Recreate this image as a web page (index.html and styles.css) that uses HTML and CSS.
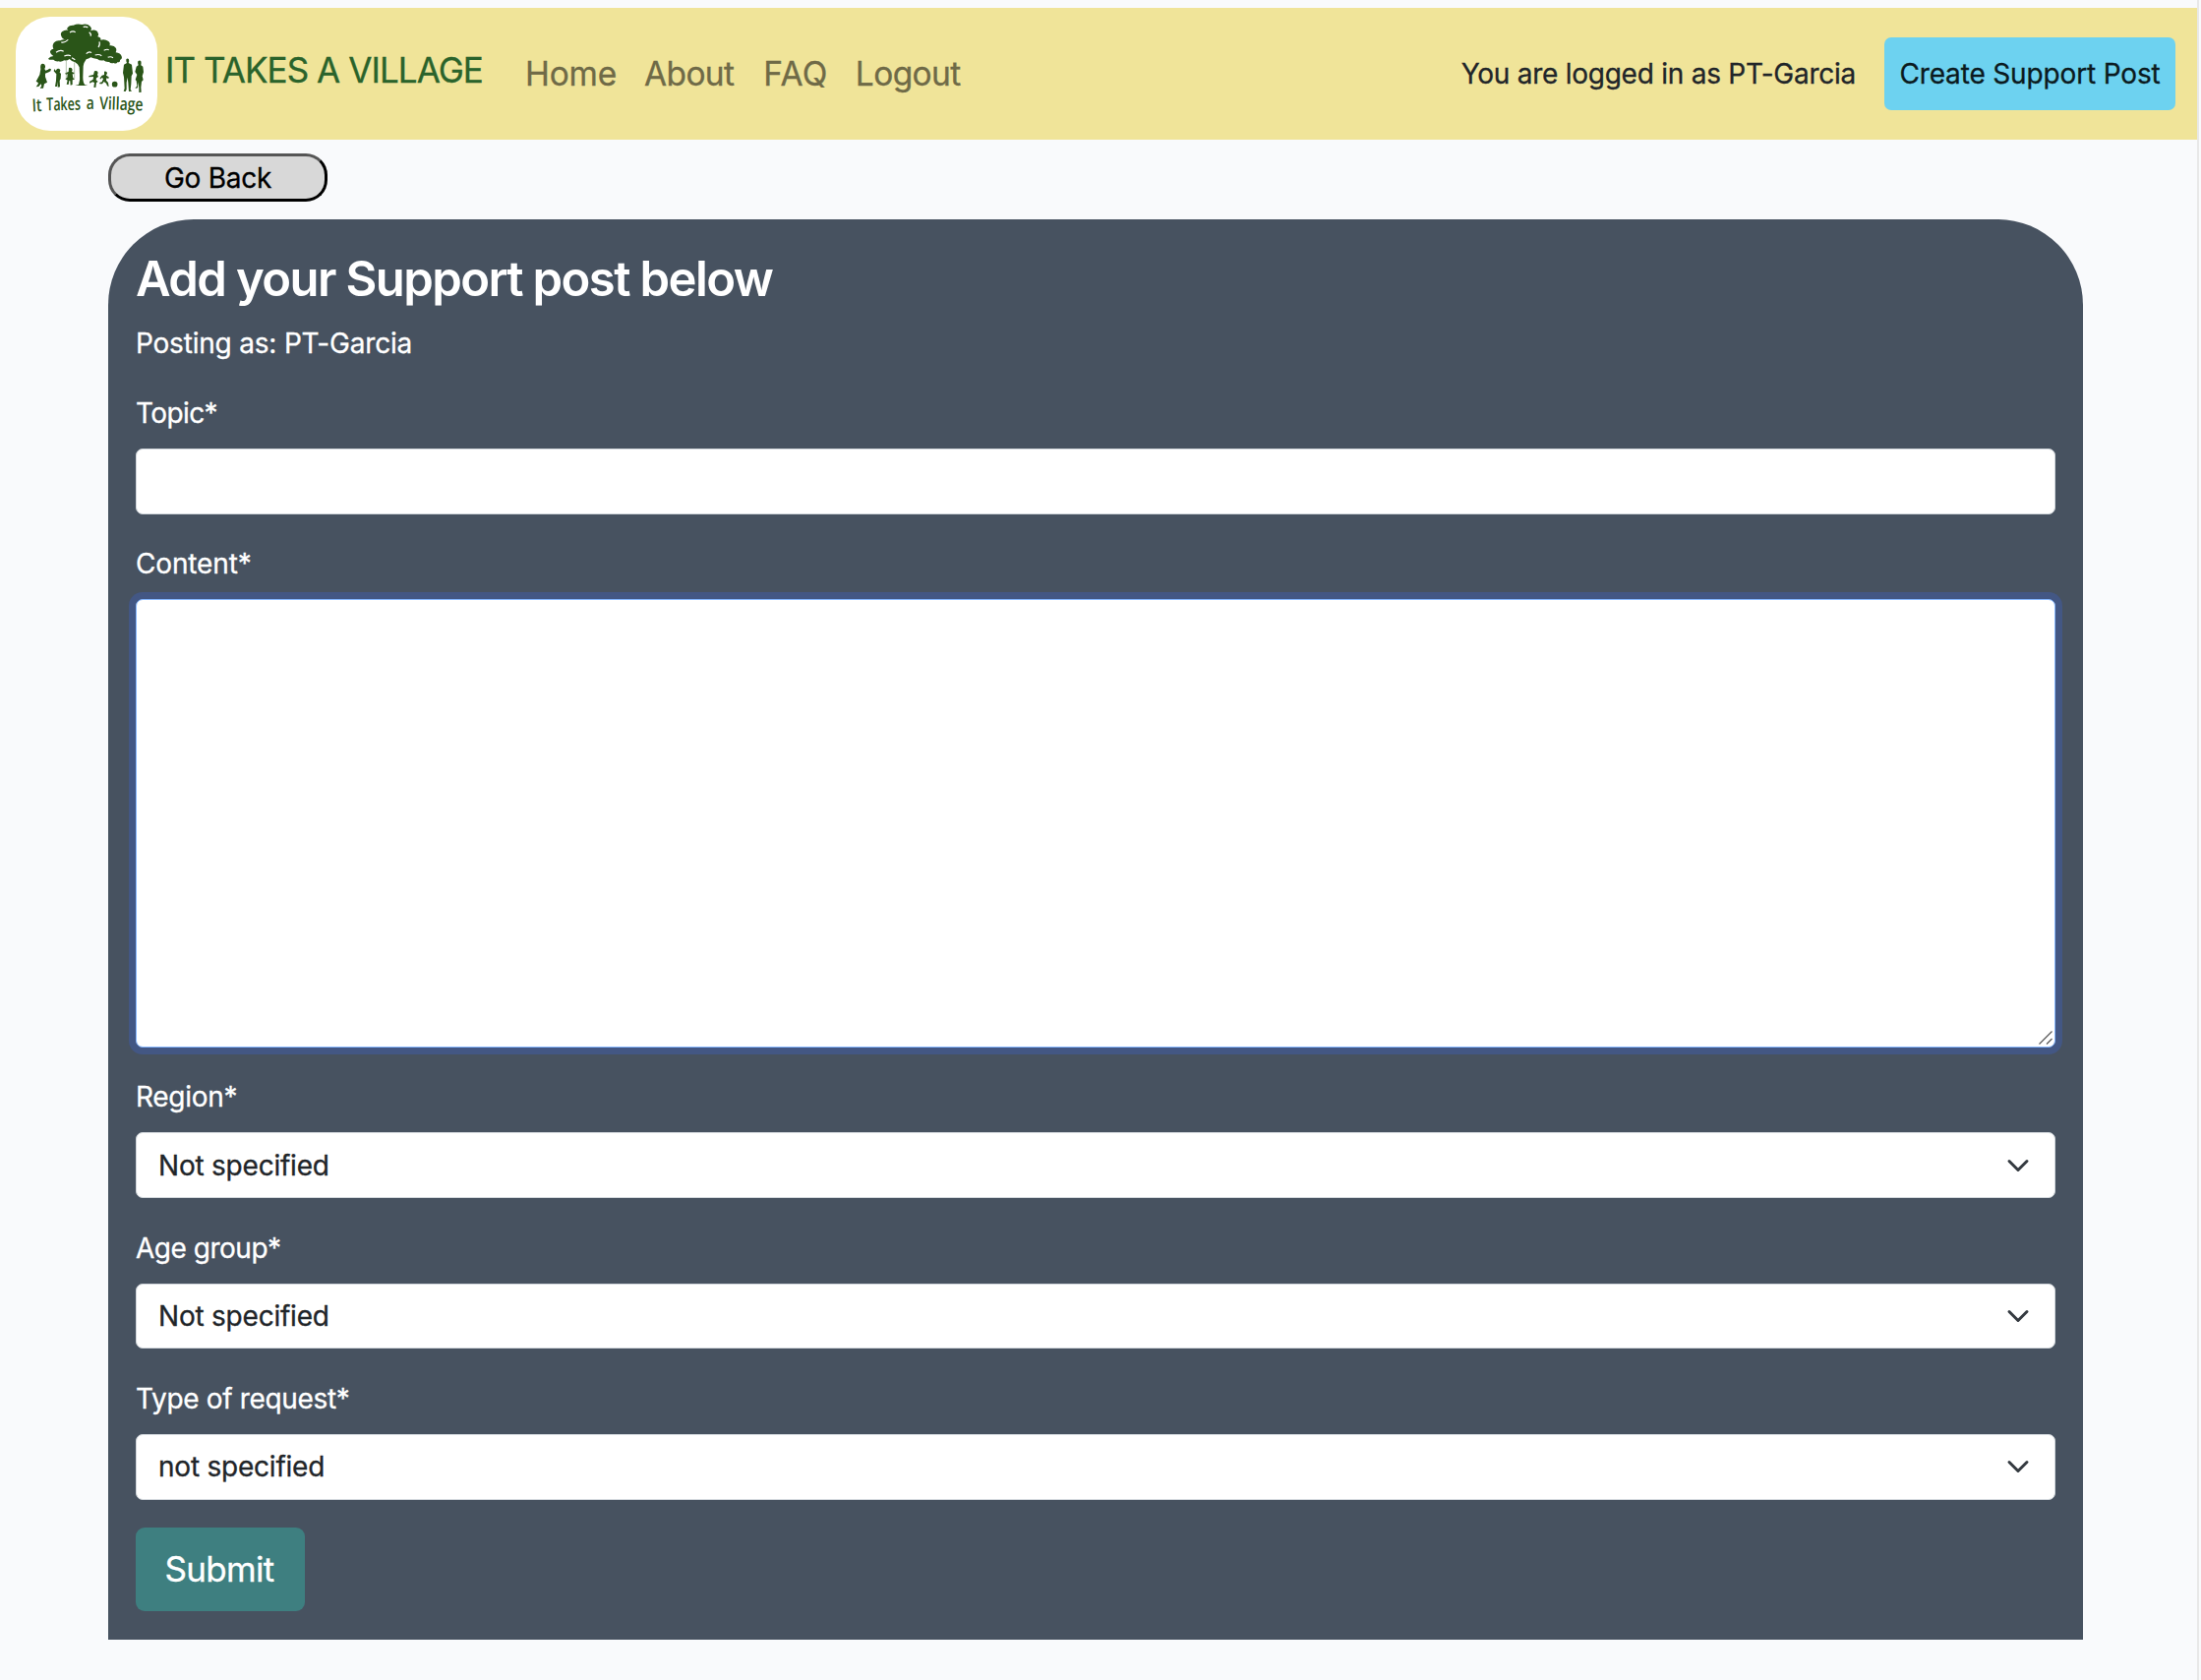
FILE: index.html
```html
<!DOCTYPE html>
<html lang="en">
<head>
<meta charset="utf-8">
<title>It Takes a Village - Add Support Post</title>
<link rel="stylesheet" href="styles.css">
</head>
<body>
<div class="page">
  <header class="navbar">
    <a class="brand">
      <svg class="logo" viewBox="48 51 432 348" role="img" aria-label="It Takes a Village logo">
        <g class="logo-ink">
          <!-- tree crown -->
          <path d="M206 84 Q212 76 224 77 Q236 71 250 75 Q266 71 275 80 Q282 87 276 94 Q290 88 297 96 Q303 104 298 112 Q309 114 307 122 Q320 118 331 126 Q338 132 334 139 Q348 137 354 147 Q357 154 353 160 Q368 162 371 172 Q374 180 366 183 Q368 190 358 190 Q355 196 347 192 Q338 195 333 189 Q322 190 316 184 Q304 186 297 180 Q284 179 277 175 Q270 179 263 181 Q256 190 254 202 L253 236 Q253 252 259 259 L268 261 L229 261 L240 258 Q245 244 243 228 L242 205 Q238 194 229 190 Q218 187 212 180 Q204 186 196 184 Q186 191 178 187 Q168 188 163 182 Q150 184 147 179 Q153 171 163 171 Q152 164 153 156 Q158 149 163 149 Q158 138 165 130 Q172 122 184 124 Q192 118 202 122 Q190 119 187 110 Q183 101 190 96 Q198 90 208 92 Q202 89 206 84Z"/>
          <!-- woman reaching out, child, child on the swing -->
          <path d="M127 195 Q136 193 138 201 Q139 206 136 210 L139 215 L147 212 Q151 207 156 211 Q156 218 149 220 L138 224 L138 234 L144 251 L135 256 L132 269 L122 269 L127 262 L125 256 L118 264 L110 265 L115 258 L117 253 L110 248 L121 228 L124 211 Q122 199 127 195Z"/>
          <path d="M174 210 Q182 207 184 214 L182 222 L186 224 L185 240 L182 246 L183 265 L176 266 L177 249 L174 264 L168 264 L171 246 L172 226 L164 217 L166 210 L170 216Z"/>
          <path d="M210 207 Q220 205 221 213 L219 219 L227 222 L225 226 L221 226 L223 238 L228 242 L221 244 L221 258 L215 260 L214 247 L211 246 L209 258 L203 257 L206 245 L199 241 L205 236 L206 225 L201 228 L199 223 L209 219Z"/>
          <!-- running children and ball -->
          <path d="M288 217 Q298 214 299 222 L297 228 L300 234 L294 238 L293 244 L299 249 L294 252 L292 267 L286 266 L288 252 L282 250 L274 254 L273 249 L284 242 L285 234 L270 235 L272 231 L285 228Z"/>
          <path d="M318 218 Q326 216 327 223 L324 230 L332 235 L331 240 L325 238 L324 245 L330 252 L332 264 L327 262 L324 254 L317 249 L312 256 L304 256 L304 252 L311 250 L315 240 L311 237 L306 242 L305 238 L311 230 L318 228Z"/>
          <circle cx="350" cy="257" r="8.5"/>
          <!-- standing couple -->
          <path d="M385 181 Q389 176 393 181 Q395 187 392 192 L402 197 L405 224 L401 232 L400 256 L398 273 L402 278 L393 279 L391 252 L389 236 L386 252 L386 273 L383 279 L377 278 L380 270 L378 235 L375 222 L378 197 L387 192 Q384 187 385 181Z"/>
          <path d="M421 187 Q426 182 430 187 Q432 194 430 199 L436 203 L438 220 L434 232 L437 244 L432 249 L430 266 L431 281 L424 282 L424 268 L422 250 L420 268 L412 270 L418 262 L416 247 L413 243 L418 228 L412 219 L416 203 L422 199 Q419 193 421 187Z"/>
        </g>
        <!-- gaps between the leaves -->
        <g class="logo-gaps">
          <path d="M213 99 Q222 93 230 98M187 128 Q194 133 208 121M171 160 Q184 150 194 157M196 171 Q207 166 216 170M219 176 L229 182M263 164 Q272 155 279 161M290 168 Q302 164 310 170M303 127 Q306 137 300 144M317 154 Q328 148 332 153M329 175 Q337 171 345 176M254 82 Q264 80 268 84M272 98 Q280 104 276 110"/>
        </g>
        <path class="logo-ropes" d="M202 184V240M227 190V240"/>
        <g class="logo-text">
          <text x="99" y="340" textLength="29" lengthAdjust="spacingAndGlyphs" transform="rotate(-3 114 338)">It</text>
          <text x="142" y="336" textLength="104" lengthAdjust="spacingAndGlyphs" transform="rotate(-1 190 335)">Takes</text>
          <text x="263" y="332" textLength="24" lengthAdjust="spacingAndGlyphs">a</text>
          <text x="303" y="333" textLength="133" lengthAdjust="spacingAndGlyphs" transform="rotate(2 303 332)">Village</text>
        </g>
      </svg>
      <span class="brand-name">IT TAKES A VILLAGE</span>
    </a>
    <nav class="links">
      <a class="link link-home">Home</a>
      <a class="link link-about">About</a>
      <a class="link link-faq">FAQ</a>
      <a class="link link-logout">Logout</a>
    </nav>
    <span class="login-state">You are logged in as PT-Garcia</span>
    <a class="create-btn">Create Support Post</a>
  </header>
  <main class="content">
    <button class="back-btn" type="button">Go Back</button>
    <section class="panel">
      <h2 class="panel-title">Add your Support post below</h2>
      <p class="author">Posting as: PT-Garcia</p>
      <form>
        <div class="field">
          <label class="label label-topic">Topic*</label>
          <div class="control"></div>
        </div>
        <div class="field">
          <label class="label label-content">Content*</label>
          <div class="control textarea">
            <svg class="grip" viewBox="0 0 14 14"><path d="M.5 13.5 13.5 .5M8 13.5 13.5 8"/></svg>
          </div>
        </div>
        <div class="field">
          <label class="label label-region">Region*</label>
          <div class="control select">Not specified<svg class="chevron" viewBox="0 0 16 16"><path d="m2 5 6 6 6-6"/></svg></div>
        </div>
        <div class="field">
          <label class="label label-age">Age group*</label>
          <div class="control select">Not specified<svg class="chevron" viewBox="0 0 16 16"><path d="m2 5 6 6 6-6"/></svg></div>
        </div>
        <div class="field">
          <label class="label label-type">Type of request*</label>
          <div class="control select">not specified<svg class="chevron" viewBox="0 0 16 16"><path d="m2 5 6 6 6-6"/></svg></div>
        </div>
        <button class="submit-btn" type="button">Submit</button>
      </form>
    </section>
  </main>
</div>
</body>
</html>
```
FILE: styles.css
```css
* { box-sizing: border-box; }

body {
  margin: 0;
  background: #f9fafc;
  color: #212529;
  font: 28px/42px Inter, "Liberation Sans", sans-serif;
  -webkit-text-stroke: 0.3px;
}

.page {
  width: 2236px;
  height: 1708px;
  padding-top: 8px;
  border-right: 2px solid #e8e8e8;
  overflow: hidden;
}

.navbar {
  display: flex;
  align-items: center;
  height: 134px;
  padding: 0 22px 0 16px;
  background: #f0e499;
}

.brand {
  display: flex;
  align-items: center;
  gap: 8px;
  width: 518px;
}

.logo {
  flex: none;
  width: 144px;
  height: 116px;
  border-radius: 35px;
  background: #fff;
}

.logo-ink { fill: #2a5518; }
.logo-gaps { fill: none; stroke: #fff; stroke-width: 3.5; }
.logo-ropes { fill: none; stroke: #6f8a63; stroke-width: 1.5; }

.logo-text {
  fill: #2a5518;
  font: 600 54px "Open Sans", sans-serif;
}

.brand-name {
  padding-bottom: 8px;
  color: #2a632b;
  font-size: 35px;
  letter-spacing: -0.93px;
  white-space: nowrap;
}

.links { display: flex; gap: 28px; }

.link {
  color: #6f6a47;
  font-size: 33.5px;
}

.link-home { letter-spacing: -0.2px; }
.link-about { margin-right: 2px; letter-spacing: -0.65px; }
.link-faq { letter-spacing: 0.4px; }
.link-logout { letter-spacing: -0.6px; }

.login-state {
  margin-left: auto;
  letter-spacing: -0.25px;
}

.create-btn {
  width: 296px;
  margin-left: 29px;
  padding: 16px 0;
  border-radius: 7px;
  background: #6dd2f0;
  color: #0b1a20;
  letter-spacing: -0.15px;
  text-align: center;
  white-space: nowrap;
}

.content {
  width: 2008px;
  margin: 14px 0 0 110px;
}

.back-btn {
  display: block;
  width: 223px;
  height: 49px;
  margin-bottom: 18px;
  padding: 0;
  border: 3px solid;
  border-color: #555 #000 #000 #555;
  border-radius: 22px;
  background: #d8d8d8;
  color: #000;
  font: inherit;
  letter-spacing: -0.27px;
}

.panel {
  height: 1444px;
  padding: 31px 28px 0;
  border-radius: 87px 87px 0 0;
  background: #475260;
  color: #fff;
}

.panel-title {
  margin: 0 0 15px;
  font-size: 49px;
  font-weight: 600;
  line-height: 59px;
  letter-spacing: -1.6px;
  -webkit-text-stroke: 0;
}

.author {
  margin: 0 0 30px;
  letter-spacing: -0.2px;
}

.field { margin-bottom: 30.7px; }
.field:last-of-type { margin-bottom: 28.4px; }

.label {
  display: block;
  height: 41px;
  margin-bottom: 15px;
  line-height: 41px;
}

.label-topic { letter-spacing: -0.6px; }
.label-content { letter-spacing: -0.15px; }
.label-region { letter-spacing: -0.3px; }
.label-age { letter-spacing: -0.48px; }
.label-type { letter-spacing: -0.34px; }

.control {
  height: 66.6px;
  border: 1px solid #d3d8dd;
  border-radius: 7px;
  background: #fff;
  color: #212529;
}

.textarea {
  display: flex;
  align-items: flex-end;
  justify-content: flex-end;
  height: 455.4px;
  padding: 2px;
  border-color: #86b7fe;
  box-shadow: 0 0 0 7px #435784;
}

.grip {
  width: 14px;
  height: 14px;
  fill: none;
  stroke: #555;
  stroke-width: 1.2;
}

.select {
  display: flex;
  align-items: center;
  justify-content: space-between;
  padding: 0 25px 0 22px;
  letter-spacing: -0.22px;
}

.chevron {
  width: 24px;
  height: 24px;
  fill: none;
  stroke: #343a40;
  stroke-width: 2;
  stroke-linecap: round;
  stroke-linejoin: round;
}

.submit-btn {
  display: block;
  width: 172px;
  height: 85px;
  padding: 0 2px 0 0;
  border: 0;
  border-radius: 9px;
  background: #3e7f80;
  color: #fff;
  font: 35px/52px Inter, "Liberation Sans", sans-serif;
  letter-spacing: -0.7px;
}
```
